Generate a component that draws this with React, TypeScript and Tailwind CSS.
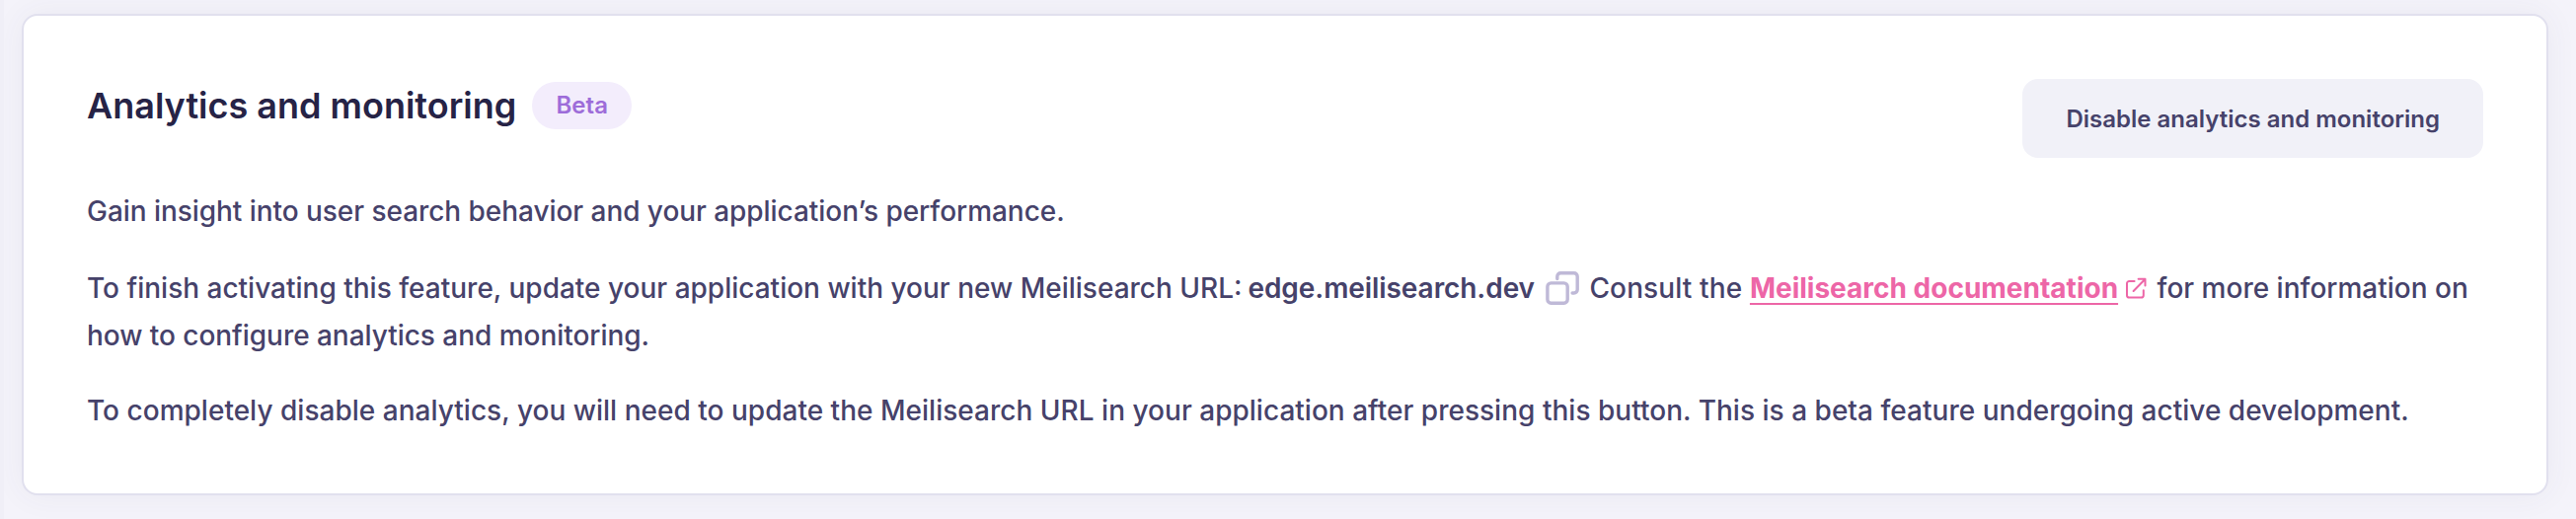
function CopyIcon() {
  return (
    <svg className="h-[34px] w-[34px]" viewBox="0 0 34 34" fill="none" stroke="currentColor" strokeWidth="3.4" strokeLinecap="round" strokeLinejoin="round">
      <rect x="1.9" y="11.9" width="20.3" height="20.3" rx="3.6" />
      <path d="M11.8 7.6V5.2a3.4 3.4 0 0 1 3.4-3.4h13.6a3.4 3.4 0 0 1 3.4 3.4v13.4a3.4 3.4 0 0 1-3.4 3.4h-1.7" />
    </svg>
  );
}

function ExternalLinkIcon() {
  return (
    <svg className="h-[22px] w-[22px]" viewBox="0 0 22 22" fill="none" stroke="currentColor" strokeWidth="2" strokeLinecap="round" strokeLinejoin="round">
      <path d="M8.6 3.9H3.4A2.4 2.4 0 0 0 1 6.3v11.9a2.4 2.4 0 0 0 2.4 2.4h12a2.4 2.4 0 0 0 2.4-2.4V13.2" />
      <path d="M12.6 1.8h6.9v6.6M7.6 14 19.1 2.2" />
    </svg>
  );
}

export default function App() {
  return (
    <div className="flex h-[526px] w-[2610px] overflow-hidden border-l-4 border-[#f0eff7] bg-[#f4f3fa] pt-[14px] pr-[28px] pb-[24px] pl-[18px] font-[Inter,sans-serif] text-[28px] leading-[48px] font-medium text-[#46426a]">
      <section className="flex flex-1 flex-col rounded-[16px] border-2 border-[#e1e0ee] bg-white px-[64px] pt-[64px] shadow-[0_0_32px_rgba(70,66,106,0.06)]">
        <header className="flex items-start justify-between">
          <div className="flex items-center gap-[16px]">
            <h1 className="text-[36px] leading-[54px] font-semibold text-[#262346]">Analytics and monitoring</h1>
            <span className="flex h-[48px] w-[101px] items-center justify-center rounded-full bg-[#f3edfc] text-[24px] font-semibold text-[#9d6cd9]">Beta</span>
          </div>
          <button className="h-[80px] rounded-[16px] bg-[#f1f1f8] px-[44px] pt-px text-[24px] font-semibold">Disable analytics and monitoring</button>
        </header>
        <p className="mt-[30px] tracking-[-0.05px]">Gain insight into user search behavior and your application’s performance.</p>
        <p className="mt-[30px]">
          To finish activating this feature, update your application with your new Meilisearch URL:{" "}
          <b className="-ml-[1.5px] font-semibold tracking-[-0.07px]">edge.meilisearch.dev</b>
          <button aria-label="Copy URL" className="mr-[10.5px] ml-[11px] inline-flex h-[34px] w-[34px] align-[-7px] text-[#bfb9d7]">
            <CopyIcon />
          </button>
          <span className="tracking-[0.12px]">Consult the </span>
          <a href="#" className="font-bold text-[#ed66a7] underline decoration-2 underline-offset-[5px] [text-decoration-skip-ink:none]">Meilisearch documentation</a>
          <span className="mr-[2px] ml-[8px] inline-flex h-[22px] w-[22px] align-[-1px] text-[#ed66a7]">
            <ExternalLinkIcon />
          </span>{" "}
          for more information on <span className="tracking-[-0.04px]">how to configure analytics and monitoring.</span>
        </p>
        <p className="mt-[28px] tracking-[0.018px]">To completely disable analytics, you will need to update the Meilisearch URL in your application after pressing this button. This is a beta feature undergoing active development.</p>
      </section>
    </div>
  );
}
